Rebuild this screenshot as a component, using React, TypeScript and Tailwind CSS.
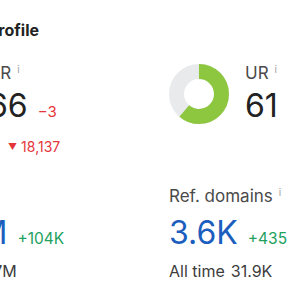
import React from 'react';

function Donut({ value }: { value: number }) {
  const r = 22.5;
  const c = 2 * Math.PI * r;
  return (
    <svg width="60" height="60" viewBox="0 0 60 60" className="shrink-0">
      <circle cx="30" cy="30" r={r} fill="none" stroke="#e9eaec" strokeWidth="15" />
      <circle
        cx="30"
        cy="30"
        r={r}
        fill="none"
        stroke="#8dc63f"
        strokeWidth="15"
        strokeDasharray={`${(c * value) / 100} ${c}`}
        transform="rotate(-90 30 30)"
      />
    </svg>
  );
}

function Label({ children }: { children: React.ReactNode }) {
  return (
    <div className="flex items-start text-[17px] leading-5 text-[#4a4a4a]">
      <span>{children}</span>
      <span className="ml-[6px] text-[10px] leading-3 text-[#a0a0a0]">i</span>
    </div>
  );
}

export default function App() {
  return (
    <div className="w-[300px] h-[300px] overflow-hidden bg-white font-['Inter',sans-serif]">
      <div className="ml-[-88px] w-[520px] pt-[18px]">
        <h2 className="ml-[6px] text-[16px] leading-6 font-bold text-[#222]">Backlink profile</h2>

        <div className="grid grid-cols-[257px_257px] mt-[21px]">
          <div className="flex items-start gap-4">
            <Donut value={66} />
            <div>
              <Label>DR</Label>
              <div className="flex items-baseline gap-2.5 mt-[3px]">
                <span className="text-[32px] leading-10 text-[#222]">66</span>
                <span className="text-[15px] text-[#e5343a]">−3</span>
              </div>
              <div className="flex items-center gap-1 mt-[11px] pl-[20px] text-[14px] leading-5 text-[#e5343a]">
                <span className="text-[9px]">▼</span>
                <span>18,137</span>
              </div>
            </div>
          </div>

          <div className="flex items-start gap-4">
            <div className="mt-[1px]">
              <Donut value={61} />
            </div>
            <div>
              <Label>UR</Label>
              <div className="mt-[3px] text-[32px] leading-10 text-[#222]">61</div>
            </div>
          </div>
        </div>

        <div className="grid grid-cols-[257px_257px] mt-[29px]">
          <div>
            <Label>Backlinks</Label>
            <div className="flex items-baseline gap-2.5 mt-[7px]">
              <span className="text-[32px] leading-10 text-[#1b5ebe]">56.8M</span>
              <span className="text-[15.5px] text-[#22a060]">+104K</span>
            </div>
            <div className="flex gap-1.5 mt-[6px] text-[16px] leading-6 text-[#3c3c3c]">
              <span>All time</span>
              <span>257M</span>
            </div>
          </div>

          <div>
            <Label>Ref. domains</Label>
            <div className="flex items-baseline gap-2.5 mt-[7px]">
              <span className="text-[32px] leading-10 text-[#1b5ebe]">3.6K</span>
              <span className="text-[15.5px] text-[#22a060]">+435</span>
            </div>
            <div className="flex gap-1.5 mt-[6px] text-[16px] leading-6 text-[#3c3c3c]">
              <span>All time</span>
              <span>31.9K</span>
            </div>
          </div>
        </div>
      </div>
    </div>
  );
}
